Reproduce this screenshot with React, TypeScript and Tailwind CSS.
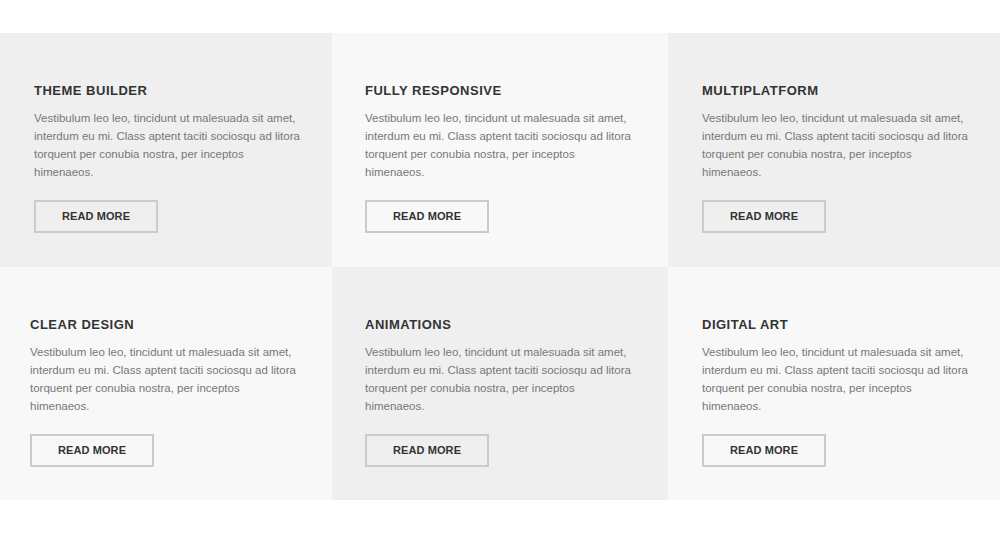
const cards = [
  { title: "THEME BUILDER", bg: "bg-[#efefef]", px: "pl-[34px] pr-[30px]" },
  { title: "FULLY RESPONSIVE", bg: "bg-[#f8f8f8]", px: "pl-[33px] pr-[30px]" },
  { title: "MULTIPLATFORM", bg: "bg-[#efefef]", px: "pl-[34px] pr-[30px]" },
  { title: "CLEAR DESIGN", bg: "bg-[#f8f8f8]", px: "pl-[30px] pr-[34px]" },
  { title: "ANIMATIONS", bg: "bg-[#efefef]", px: "pl-[33px] pr-[30px]" },
  { title: "DIGITAL ART", bg: "bg-[#f8f8f8]", px: "pl-[34px] pr-[30px]" },
];

export default function App() {
  return (
    <div className="w-[1000px] h-[534px] bg-white pt-[33px] font-['Liberation_Sans',Arial,sans-serif]">
      <div className="grid grid-cols-[332px_336px_332px] grid-rows-[234px_233px]">
        {cards.map((c) => (
          <div key={c.title} className={`${c.bg} ${c.px} pt-[50px]`}>
            <h3 className="text-[13px] leading-[16px] font-bold tracking-[0.5px] text-[#333333]">
              {c.title}
            </h3>
            <p className="mt-[10px] text-[11.5px] leading-[18px] text-[#777777] w-[268px]">
              Vestibulum leo leo, tincidunt ut malesuada sit amet, interdum eu mi. Class aptent taciti sociosqu ad litora torquent per conubia nostra, per inceptos himenaeos.
            </p>
            <button className="mt-[19px] w-[124px] h-[33px] border-2 border-[#cbcbcb] text-[11px] font-bold tracking-[0.1px] text-[#333333] flex items-center justify-center">
              READ MORE
            </button>
          </div>
        ))}
      </div>
    </div>
  );
}
